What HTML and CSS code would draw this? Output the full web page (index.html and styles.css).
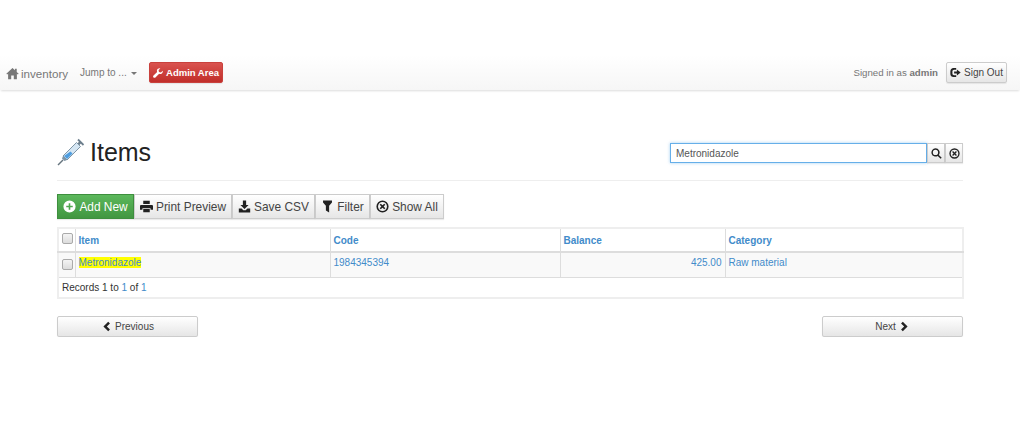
FILE: index.html
```html
<!DOCTYPE html>
<html lang="en">
<head>
    <meta charset="UTF-8">
    <title>Items - inventory</title>
    <link rel="stylesheet" href="styles.css">
</head>
<body>
    <!-- top bar -->
    <nav class="navbar">
        <a class="brand" href="#">
            <svg class="icon icon-home" viewBox="0 0 16 16"><path d="M8 1.200 0.400 8.200 1.400 9.300 2.600 8.200V15H6.400V10.400H9.600V15H13.400V8.200L14.600 9.300 15.600 8.200 13.200 6V2H11V4Z"/></svg>
            inventory
        </a>
        <a class="jump" href="#">Jump to ... <span class="caret"></span></a>
        <a class="btn btn-danger btn-admin" href="#">
            <svg class="icon" viewBox="0 0 16 16"><path d="M15.600 4.200 12.600 7 9.600 6.200 8.900 3.400 11.800 0.500C9.600-0.200 7 1 6.400 3.200 6.100 4.300 6.300 5.300 6.700 6.200L0.800 12C-0.100 12.900-0.100 14.200 0.800 15.100 1.700 16 3 16 3.900 15.100L9.800 9.300C10.700 9.700 11.800 9.900 12.800 9.600 15 9 16.200 6.400 15.600 4.200Z"/></svg>
            Admin Area
        </a>
        <div class="nav-right">
            <span class="signed">Signed in as <b>admin</b></span>
            <a class="btn btn-signout" href="#">
                <svg class="icon" viewBox="0 0 16 16"><path d="M9 1.500V4H6C4.600 4 3.500 5.100 3.500 6.500V9.500C3.500 10.900 4.600 12 6 12H9V14.500H5C2.500 14.500 0.500 12.500 0.500 10V6C0.500 3.500 2.500 1.500 5 1.500Z"/><path d="M6 6.500H10V3.800L15.500 8 10 12.200V9.500H6Z"/></svg>
                Sign Out
            </a>
        </div>
    </nav>

    <div class="container">
        <div class="page-head">
            <h1>
                <svg class="syringe" viewBox="0 0 28 28">
                    <path d="M21 1.500 26.500 7" stroke="#6d7f8d" stroke-width="1.800" fill="none"/>
                    <path d="M23.500 4.200 20.500 7.200" stroke="#6d7f8d" stroke-width="2.600" fill="none"/>
                    <path d="M19.500 4.500 23.500 8.500 10 22 6 18Z" fill="#d5e6f3" stroke="#7f95a6" stroke-width="1"/>
                    <path d="M13.500 13.500 15.500 15.500 10 21 7 18Z" fill="#4f9ee0"/>
                    <path d="M6 18 10 22 7.500 23 5 20.500Z" fill="#7f95a6"/>
                    <path d="M6 22 1 27" stroke="#66757f" stroke-width="1.400" fill="none"/>
                </svg>
                Items
            </h1>
            <form class="search">
                <input class="search-input" type="text" value="Metronidazole">
                <button class="btn btn-addon" type="button">
                    <svg class="icon" viewBox="0 0 16 16"><path fill-rule="evenodd" d="M6.500 0.500A6 6 0 0 1 11.400 10L15.600 14.200 14 15.800 9.800 11.600A6 6 0 1 1 6.500 0.500ZM6.500 2.700A3.800 3.800 0 1 0 6.500 10.300 3.800 3.800 0 0 0 6.500 2.700Z"/></svg>
                </button>
                <button class="btn btn-addon" type="button">
                    <svg class="icon" viewBox="0 0 16 16"><path fill-rule="evenodd" d="M8 0.500A7.500 7.500 0 1 1 8 15.500 7.500 7.500 0 0 1 8 0.500ZM8 2.500A5.500 5.500 0 1 0 8 13.500 5.500 5.500 0 0 0 8 2.500ZM5.900 4.500 8 6.600 10.100 4.500 11.500 5.900 9.400 8 11.500 10.100 10.100 11.500 8 9.400 5.900 11.500 4.500 10.100 6.600 8 4.500 5.900Z"/></svg>
                </button>
            </form>
        </div>

        <div class="toolbar">
            <a class="btn btn-success btn-add" href="#">
                <svg class="icon" viewBox="0 0 16 16"><path fill-rule="evenodd" d="M8 0.500A7.500 7.500 0 1 1 8 15.500 7.500 7.500 0 0 1 8 0.500ZM7 4V7H4V9H7V12H9V9H12V7H9V4Z"/></svg>
                Add New
            </a>
            <a class="btn btn-print" href="#">
                <svg class="icon" viewBox="0 0 16 16"><path fill-rule="evenodd" d="M4 1H12V5H4ZM1.500 6H14.500C15.300 6 16 6.700 16 7.500V12H13V10H3V12H0V7.500C0 6.700 0.700 6 1.500 6ZM4 11H12V15H4Z"/></svg>
                Print Preview
            </a>
            <a class="btn btn-csv" href="#">
                <svg class="icon" viewBox="0 0 16 16"><path d="M6 0.500H10V6H13L8 11 3 6H6ZM1 10.500H4.500L6.500 12.500H9.500L11.500 10.500H15V15.500H1Z"/></svg>
                Save CSV
            </a>
            <a class="btn btn-filter" href="#">
                <svg class="icon" viewBox="0 0 16 16"><path d="M2.500 0.500H13.500V3L10 7V15.500L6 13V7L2.500 3Z"/></svg>
                Filter
            </a>
            <a class="btn btn-all" href="#">
                <svg class="icon" viewBox="0 0 16 16"><path fill-rule="evenodd" d="M8 0.500A7.500 7.500 0 1 1 8 15.500 7.500 7.500 0 0 1 8 0.500ZM8 2.500A5.500 5.500 0 1 0 8 13.500 5.500 5.500 0 0 0 8 2.500ZM5.900 4.500 8 6.600 10.100 4.500 11.500 5.900 9.400 8 11.500 10.100 10.100 11.500 8 9.400 5.900 11.500 4.500 10.100 6.600 8 4.500 5.900Z"/></svg>
                Show All
            </a>
        </div>

        <table class="grid">
            <thead>
                <tr>
                    <th class="col-check"><input class="check" type="checkbox"></th>
                    <th class="col-item"><a href="#">Item</a></th>
                    <th class="col-code"><a href="#">Code</a></th>
                    <th class="col-balance"><a href="#">Balance</a></th>
                    <th class="col-category"><a href="#">Category</a></th>
                </tr>
            </thead>
            <tbody>
                <tr>
                    <td><input class="check" type="checkbox"></td>
                    <td><a href="#"><span class="hilite">Metronidazole</span></a></td>
                    <td><a href="#">1984345394</a></td>
                    <td class="num"><a href="#">425.00</a></td>
                    <td><a href="#">Raw material</a></td>
                </tr>
            </tbody>
            <tfoot>
                <tr>
                    <td colspan="5">Records 1 to <a href="#">1</a> of <a href="#">1</a></td>
                </tr>
            </tfoot>
        </table>

        <div class="pager">
            <a class="btn btn-page" href="#">
                <svg class="icon" viewBox="0 0 16 16"><path d="M10.500 1 13 3.500 8.500 8 13 12.500 10.500 15 3.500 8Z"/></svg>
                Previous
            </a>
            <a class="btn btn-page" href="#">
                Next
                <svg class="icon" viewBox="0 0 16 16"><path d="M5.500 1 3 3.500 7.500 8 3 12.500 5.500 15 12.500 8Z"/></svg>
            </a>
        </div>
    </div>
</body>
</html>
```

FILE: styles.css
```css
/* General styling */
body {
    margin: 0;
    background: #fff;
    color: #333;
    font-family: "Liberation Sans", Arial, sans-serif;
    font-size: 10px;
}

a {
    color: #428bca;
    text-decoration: none;
}

.icon {
    width: 1em;
    height: 1em;
    fill: currentColor;
    flex: none;
}

/* Buttons */
.btn {
    display: flex;
    align-items: center;
    justify-content: center;
    gap: 3px;
    box-sizing: border-box;
    border: 1px solid #ccc;
    border-radius: 2px;
    background: linear-gradient(to bottom, #fff, #e6e6e6);
    color: #444;
    box-shadow: 0 1px 1px rgba(0, 0, 0, 0.08);
    font-family: inherit;
    padding: 0;
}

.btn .icon {
    color: #222;
}

.btn-danger {
    background: linear-gradient(to bottom, #d9534f, #c12e2a);
    border-color: #c9413d;
    color: #fff;
}

.btn-success {
    background: linear-gradient(to bottom, #5cb85c, #419641);
    border-color: #3e8f3e;
    color: #fff;
}

.btn-danger .icon,
.btn-success .icon {
    color: #fff;
}

/* Navbar */
.navbar {
    display: flex;
    align-items: center;
    height: 35px;
    margin-top: 55px;
    padding: 0 13px 0 6px;
    background: linear-gradient(to bottom, #fff, #f6f6f6);
    box-shadow: 0 2px 2px -1px rgba(0, 0, 0, 0.14);
}

.brand {
    display: flex;
    align-items: center;
    gap: 2px;
    width: 74px;
    padding-top: 2px;
    color: #777;
    font-size: 11.600px;
}

.brand .icon {
    font-size: 13px;
}

.jump {
    width: 69px;
    color: #777;
    font-size: 10px;
}

.caret {
    display: inline-block;
    margin-left: 2px;
    border-top: 3px solid #777;
    border-left: 3px solid transparent;
    border-right: 3px solid transparent;
    vertical-align: middle;
}

.btn-admin {
    width: 74px;
    height: 21px;
    font-size: 9.500px;
    font-weight: bold;
}

.btn-admin .icon {
    font-size: 10px;
}

.nav-right {
    display: flex;
    align-items: center;
    gap: 8px;
    margin-left: auto;
}

.signed {
    color: #777;
    font-size: 9.700px;
}

.btn-signout {
    width: 61px;
    height: 21px;
    font-size: 10px;
}

.btn-signout .icon {
    font-size: 11px;
}

/* Page content */
.container {
    padding: 0 57px;
}

.page-head {
    display: flex;
    justify-content: space-between;
    box-sizing: border-box;
    height: 43px;
    margin-top: 48px;
    padding-bottom: 14px;
    border-bottom: 1px solid #eee;
}

h1 {
    display: flex;
    align-items: center;
    gap: 5px;
    margin: 0;
    font-size: 25px;
    font-weight: normal;
    color: #222;
}

.syringe {
    width: 28px;
    height: 28px;
}

.search {
    display: flex;
    margin: 5px 0 0;
}

.search-input {
    box-sizing: border-box;
    width: 257px;
    height: 20px;
    padding: 0 5px;
    border: 1px solid #66afe9;
    outline: none;
    box-shadow: 0 0 3px rgba(102, 175, 233, 0.6);
    color: #555;
    font-family: inherit;
    font-size: 10px;
}

.btn-addon {
    width: 18px;
    height: 20px;
    border-radius: 0;
    font-size: 11px;
}

.toolbar {
    display: flex;
    margin-top: 13px;
}

.toolbar .btn {
    height: 25px;
    font-size: 11.900px;
    border-radius: 0;
}

.toolbar .icon {
    font-size: 13px;
}

.btn-add {
    width: 77px;
}

.btn-print {
    width: 98px;
}

.btn-csv {
    width: 83px;
}

.btn-filter {
    width: 55px;
}

.btn-all {
    width: 74px;
}

/* Table */
.grid {
    width: 907px;
    margin-top: 8px;
    border-collapse: collapse;
    table-layout: fixed;
    border: 2px solid #eee;
}

.grid th,
.grid td {
    box-sizing: border-box;
    height: 25px;
    padding: 0 3px;
    border: 1px solid #ddd;
    text-align: left;
    vertical-align: middle;
}

.grid th {
    height: 24px;
    border-bottom-width: 2px;
    font-weight: bold;
    color: #428bca;
}

.grid thead th:first-child {
    padding-bottom: 3px;
}

.grid tbody td {
    padding-bottom: 5px;
    background: #f9f9f9;
}

.grid tbody td:first-child {
    padding-bottom: 0;
}

.grid tfoot td {
    height: 21px;
    border-left: 0;
    border-right: 0;
}

.col-check {
    width: 17px;
}

.col-item {
    width: 255px;
}

.col-code {
    width: 230px;
}

.col-balance {
    width: 165px;
}

.grid .num {
    text-align: right;
}

.hilite {
    background: #ff0;
}

.check {
    appearance: none;
    display: block;
    width: 11px;
    height: 11px;
    margin: 0 auto;
    border: 1px solid #aaa;
    border-radius: 2px;
    background: linear-gradient(to bottom, #f4f4f4, #dcdcdc);
}

/* Pager */
.pager {
    display: flex;
    justify-content: space-between;
    margin-top: 17px;
}

.btn-page {
    width: 141px;
    height: 21px;
    font-size: 10px;
}

.btn-page .icon {
    font-size: 11px;
}
```
